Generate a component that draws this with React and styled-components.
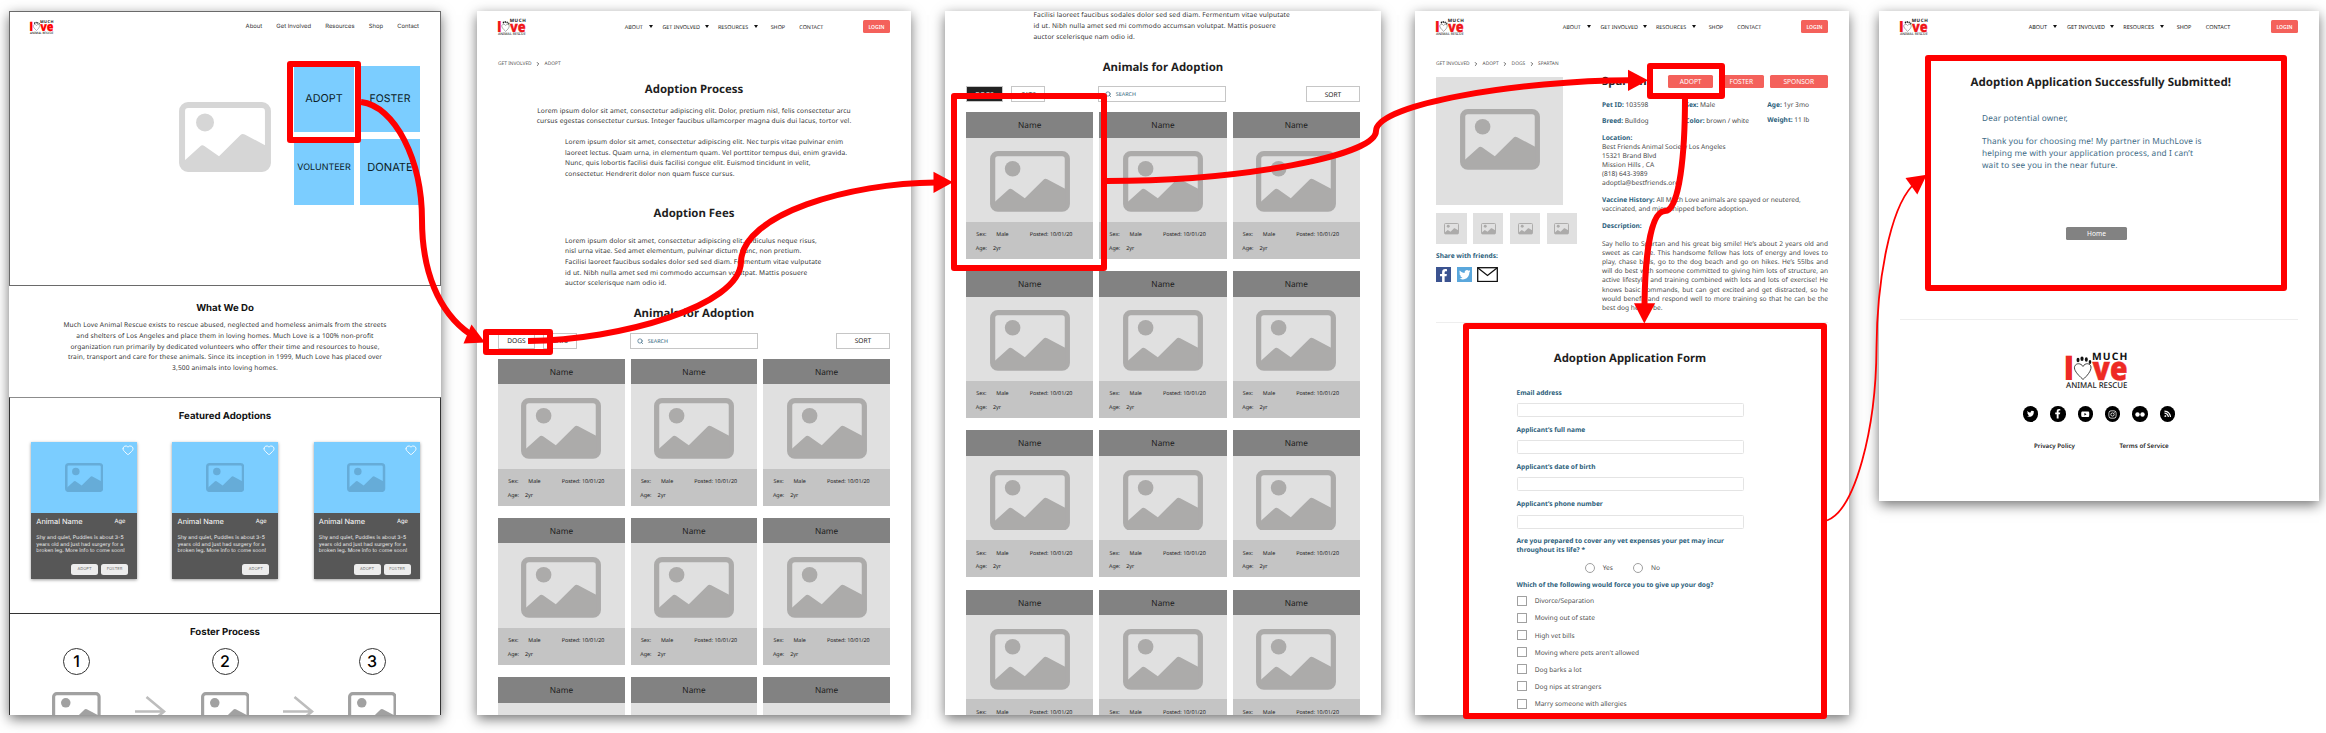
import React from 'react';
import styled, { createGlobalStyle } from 'styled-components';
import { Heart, Search, ChevronRight } from 'lucide-react';
import { FaFacebookF, FaTwitter, FaYoutube, FaInstagram, FaRss } from 'react-icons/fa';

const GlobalStyle = createGlobalStyle`
  *, *::before, *::after { box-sizing: border-box; }
  body { margin: 0; background: #fff; text-rendering: geometricPrecision; }
`;

const noto = '"Noto Sans", sans-serif';
const inter = 'Inter, sans-serif';
const coral = '#f4615b';
const slate = '#2d5f7c';

/* ---------- board ---------- */

const Board = styled.main`
  position: relative;
  display: flex;
  align-items: flex-start;
  width: 2326px;
  height: 733px;
  padding: 11px 0 0 9px;
  overflow: hidden;
  background: #fff;
  font-family: ${noto};
  color: #222;
`;

const Screen = styled.section`
  flex: none;
  width: ${(p) => p.$w}px;
  height: ${(p) => p.$h || 704}px;
  margin-left: ${(p) => p.$gap || 0}px;
  padding: 0 ${(p) => (p.$flush ? 0 : 21)}px;
  overflow: hidden;
  background: #fff;
  box-shadow: 0 4px 12px rgba(0, 0, 0, 0.55);
  font-family: ${(p) => (p.$flush ? inter : noto)};
`;

/* ---------- shared pieces ---------- */

const Title = styled.h2`
  margin: ${(p) => p.$mt}px 0 -0.5px ${(p) => p.$shift || 0}px;
  padding-top: 0.5px;
  font-size: ${(p) => p.$size || 11.4}px;
  font-weight: 700;
  line-height: 16px;
  text-align: center;
  white-space: nowrap;
  color: #1f1f1f;
`;

const Copy = styled.p`
  margin: ${(p) => p.$mt}px 0 -0.85px ${(p) => p.$indent || 0}px;
  padding-top: 0.85px;
  font-family: ${noto};
  font-size: 6.6px;
  line-height: 10.67px;
  letter-spacing: ${(p) => p.$track || 0.14}px;
  text-align: ${(p) => (p.$center ? 'center' : 'left')};
  white-space: pre;
  color: #333;
`;

const Rule = styled.hr`
  height: 1px;
  margin: ${(p) => p.$mt}px 0 0;
  border: 0;
  background: #eee;
`;

const PictureSvg = styled.svg`
  display: block;
  flex: none;
  width: ${(p) => p.$w}px;
  height: ${(p) => p.$w * 0.76}px;
  color: ${(p) => p.$color || '#acabaa'};
`;

function Picture({ w, color }) {
  return (
    <PictureSvg $w={w} $color={color} viewBox="0 0 92 70">
      <rect x="3" y="3" width="86" height="64" rx="6" fill="none" stroke="currentColor" strokeWidth="6" />
      <circle cx="26" cy="20.5" r="9" fill="currentColor" />
      <path
        d="M5 59 L21 44.500 Q23 42.500 25.300 44 L40 54.300 L61.500 33 Q63.300 31.300 65.800 32.500 L87 43.800 V67 H5Z"
        fill="currentColor"
      />
    </PictureSvg>
  );
}

const LogoSvg = styled.svg`
  display: block;
  flex: none;
  width: ${(p) => p.$w}px;
  height: ${(p) => p.$w * 0.585}px;
  overflow: visible;
`;

function Logo({ w, red = '#ee2a24' }) {
  return (
    <LogoSvg $w={w} viewBox="0 0 61.500 36">
      <g fontFamily='"Noto Sans", sans-serif' fontWeight="900">
        <text x="-2.300" y="27.800" fontSize="32" fill={red}>l</text>
        <text x="26.500" y="27.800" fontSize="32.500" fill={red} stroke={red} strokeWidth="0.500" textLength="35" lengthAdjust="spacingAndGlyphs">ve</text>
        <text x="26" y="7.700" fontSize="10.300" fontWeight="700" fill="#111" textLength="35.500">MUCH</text>
      </g>
      <text x="0" y="35.800" fontFamily='"Noto Sans", sans-serif' fontWeight="500" fontSize="8" fill="#222" textLength="61.500" lengthAdjust="spacingAndGlyphs">
        ANIMAL RESCUE
      </text>
      <path
        d="M17 27.500 C11 22 7.600 18 8.600 14.500 C10 10.700 15 11 17 14.500 C19 10.500 24.500 11 25 15 C25.300 19 21 24 17 27.500Z"
        fill="none"
        stroke="#222"
        strokeWidth="0.850"
      />
      <g fill="#111">
        <ellipse cx="12" cy="8" rx="1.500" ry="2.200" />
        <ellipse cx="16" cy="6.800" rx="1.600" ry="2.300" />
        <ellipse cx="20.300" cy="7.500" rx="1.500" ry="2.200" />
        <ellipse cx="24" cy="10" rx="1.300" ry="2" />
      </g>
    </LogoSvg>
  );
}

/* ---------- site header ---------- */

const HeaderBar = styled.header`
  display: flex;
  align-items: center;
  height: 31.4px;
`;

const Nav = styled.nav`
  display: grid;
  grid-template-columns: 37.7px 55.6px 52.7px 28.7px auto;
  margin: 0 auto 0 ${(p) => p.$ml}px;
  font-size: 5.42px;
  line-height: 8px;
  white-space: nowrap;
  zoom: ${(p) => p.$scale || 1};
`;

const NavItem = styled.span`
  display: flex;
  align-items: center;
  justify-content: space-between;
  padding-right: ${(p) => p.$pad || 9.4}px;
`;

const Caret = styled.i`
  border: solid transparent;
  border-width: 3px 2px 0;
  border-top-color: #111;
`;

const Button = styled.button`
  display: flex;
  flex: none;
  align-items: center;
  justify-content: center;
  width: ${(p) => p.$w}px;
  height: 13.2px;
  padding: 0;
  border: 0;
  border-radius: 1.5px;
  background: ${(p) => p.$bg || coral};
  color: #fff;
  font: ${(p) => p.$weight || 400} ${(p) => p.$size || 6.6}px ${noto};
`;

function Header({ ml = 99, scale }) {
  return (
    <HeaderBar>
      <Logo w={27.7} red="#f0161a" />
      <Nav $ml={ml} $scale={scale}>
        <NavItem>ABOUT<Caret /></NavItem>
        <NavItem>GET INVOLVED<Caret /></NavItem>
        <NavItem $pad={12.3}>RESOURCES<Caret /></NavItem>
        <NavItem>SHOP</NavItem>
        <NavItem>CONTACT</NavItem>
      </Nav>
      <Button $w={27} $size={5} $weight={600}>LOGIN</Button>
    </HeaderBar>
  );
}

const Crumbs = styled.div`
  display: flex;
  align-items: center;
  gap: 3.5px;
  height: 8px;
  margin: 17.2px 0 -0.6px;
  font-size: 4.84px;
  color: #555;
`;

function Breadcrumb({ trail }) {
  return (
    <Crumbs>
      {trail.map((step, i) => (
        <React.Fragment key={step}>
          {i > 0 && <ChevronRight size={6} strokeWidth={3.6} />}
          <span>{step}</span>
        </React.Fragment>
      ))}
    </Crumbs>
  );
}

/* ---------- home ---------- */

const Hero = styled.div`
  height: 275px;
  border: 1px solid #6a6a6a;
`;

const HomeBar = styled.header`
  display: flex;
  align-items: center;
  justify-content: space-between;
  height: 29.8px;
  padding: 0 21px 0 20px;
`;

const HomeNav = styled.nav`
  display: flex;
  gap: 14.1px;
  font-size: 5.9px;
  color: #333;
`;

const HeroRow = styled.div`
  display: flex;
  gap: 23px;
  padding: 24px 0 0 169px;
`;

const HeroPicture = styled.div`
  padding-top: 36.7px;
`;

const Tiles = styled.div`
  display: grid;
  grid-template-columns: 60px 60px;
  grid-auto-rows: 66px;
  gap: 7px 6px;
`;

const Tile = styled.div`
  display: flex;
  align-items: center;
  justify-content: center;
  padding-bottom: ${(p) => (p.$raised ? 9 : 0)}px;
  background: #7bcdff;
  font-size: ${(p) => p.$size}px;
  color: #0c1c26;
`;

const About = styled.div`
  height: 111px;
  padding-top: 16.3px;
`;

const HomeTitle = styled.h2`
  margin: 0 0 -0.6px;
  padding-top: 0.6px;
  font-size: 9.65px;
  line-height: 12px;
  text-align: center;
  color: #111;
`;

const HomeSection = styled.div`
  height: ${(p) => p.$h}px;
  padding-top: 12px;
  border: solid #333;
  border-width: 1px 1px 0;
  border-top-color: ${(p) => p.$edge || '#333'};
`;

const FeatureRow = styled.div`
  display: flex;
  justify-content: space-between;
  padding: 19.7px 20.5px 0 21px;
`;

const FeatureCard = styled.article`
  width: 106px;
  height: 137.3px;
  background: #575757;
  color: #eee;
  box-shadow: 0 1px 3px rgba(0, 0, 0, 0.4);
`;

const FeatureImage = styled.div`
  display: flex;
  justify-content: center;
  position: relative;
  height: 71.3px;
  padding-top: 21px;
  background: #7bcdff;
`;

const Favorite = styled(Heart)`
  position: absolute;
  top: 2.2px;
  right: 2.8px;
  width: 12px;
  height: 12px;
  color: #fff;
`;

const FeatureHead = styled.div`
  display: flex;
  align-items: center;
  justify-content: space-between;
  height: 8px;
  margin: 4.7px 11.5px 0 5.3px;
  font-size: 7.4px;
  color: #fff;
`;

const FeatureAge = styled.span`
  font-size: 5.8px;
`;

const FeatureText = styled.p`
  margin: 9.3px 0 0 5.3px;
  font-size: 5.2px;
  line-height: 6.75px;
  white-space: pre;
`;

const Chips = styled.div`
  display: flex;
  justify-content: flex-end;
  gap: 3px;
  margin: 9px 9px 0 0;
`;

const Chip = styled.span`
  width: 27px;
  border-radius: 2.5px;
  background: #ededed;
  color: #777;
  font-size: 4.05px;
  line-height: 10.7px;
  text-align: center;
`;

const Steps = styled.div`
  display: grid;
  grid-template-columns: 49px 99.5px 49px 98px 49px;
  justify-items: center;
  row-gap: 16.8px;
  padding: 10.2px 0 0 42px;
`;

const StepNumber = styled.span`
  grid-column: ${(p) => p.$col};
  width: 27px;
  height: 27px;
  border: 1px solid #333;
  border-radius: 50%;
  font-size: 16px;
  font-weight: 500;
  line-height: 25px;
  text-align: center;
  color: #000;
`;

const ArrowSvg = styled.svg`
  display: block;
  width: 31px;
  height: 31px;
  margin-top: 4.5px;
`;

function StepArrow() {
  return (
    <ArrowSvg viewBox="0 0 31 31" fill="none" stroke="#bdbdbd" strokeWidth="2.600">
      <path d="M0 15.500H29M11.500 1L29 15.500L11.500 30" />
    </ArrowSvg>
  );
}

function Feature({ actions }) {
  return (
    <FeatureCard>
      <FeatureImage>
        <Picture w={38.3} color="#66acd8" />
        <Favorite strokeWidth={1.8} />
      </FeatureImage>
      <FeatureHead>
        Animal Name
        <FeatureAge>Age</FeatureAge>
      </FeatureHead>
      <FeatureText>
        {'Shy and quiet, Puddles is about 3-5\nyears old and just had surgery for a\nbroken leg. More info to come soon!'}
      </FeatureText>
      <Chips>{actions.map((a) => <Chip key={a}>{a}</Chip>)}</Chips>
    </FeatureCard>
  );
}

function HomeScreen() {
  return (
    <Screen $w={432} $flush>
      <Hero>
        <HomeBar>
          <Logo w={23.5} red="#ff0000" />
          <HomeNav>
            <span>About</span>
            <span>Get Involved</span>
            <span>Resources</span>
            <span>Shop</span>
            <span>Contact</span>
          </HomeNav>
        </HomeBar>
        <HeroRow>
          <HeroPicture><Picture w={92} color="#d6d6d6" /></HeroPicture>
          <Tiles>
            <Tile $size={10.8}>ADOPT</Tile>
            <Tile $size={10.5}>FOSTER</Tile>
            <Tile $size={8.95} $raised>VOLUNTEER</Tile>
            <Tile $size={11.1} $raised>DONATE</Tile>
          </Tiles>
        </HeroRow>
      </Hero>
      <About>
        <HomeTitle>What We Do</HomeTitle>
        <Copy $mt={5.1} $center $track={0.13}>
          {'Much Love Animal Rescue exists to rescue abused, neglected and homeless animals from the streets\nand shelters of Los Angeles and place them in loving homes. Much Love is a 100% non-profit\norganization run primarily by dedicated volunteers who offer their time and resources to house,\ntrain, transport and care for these animals. Since its inception in 1999, Much Love has placed over\n3,500 animals into loving homes.'}
        </Copy>
      </About>
      <HomeSection $h={216} $edge="#8c8c8c">
        <HomeTitle>Featured Adoptions</HomeTitle>
        <FeatureRow>
          <Feature actions={['ADOPT', 'FOSTER']} />
          <Feature actions={['ADOPT']} />
          <Feature actions={['ADOPT', 'FOSTER']} />
        </FeatureRow>
      </HomeSection>
      <HomeSection $h={130}>
        <HomeTitle>Foster Process</HomeTitle>
        <Steps>
          <StepNumber $col={1}>1</StepNumber>
          <StepNumber $col={3}>2</StepNumber>
          <StepNumber $col={5}>3</StepNumber>
          <Picture w={48.7} color="#a1a1a1" />
          <StepArrow />
          <Picture w={48.7} color="#a1a1a1" />
          <StepArrow />
          <Picture w={48.7} color="#a1a1a1" />
        </Steps>
      </HomeSection>
    </Screen>
  );
}

/* ---------- animal listing ---------- */

const FilterBar = styled.div`
  display: grid;
  grid-template-columns: 37px 8.3px 34px 52.5px 128px 1fr 54px;
  height: 15.7px;
  margin-top: 11.3px;
`;

const FilterBox = styled.div`
  display: flex;
  grid-column: ${(p) => p.$col};
  align-items: center;
  justify-content: center;
  border: 1px solid #c6c6c6;
  background: ${(p) => (p.$active ? '#222' : '#fff')};
  color: ${(p) => (p.$active ? '#fff' : '#222')};
  font-size: 6.6px;
`;

const SearchBox = styled(FilterBox)`
  justify-content: flex-start;
  gap: 4.5px;
  padding-left: 6px;
  color: ${slate};
  font-size: 5.4px;
`;

const CardGrid = styled.div`
  display: grid;
  grid-template-columns: repeat(3, 1fr);
  gap: 12.2px 5.8px;
  margin-top: 10px;
`;

const Card = styled.article`
  height: 147px;
  background: #c4c4c4;
`;

const CardName = styled.div`
  height: 25.5px;
  background: #828282;
  font-size: 8.25px;
  line-height: 27px;
  text-align: center;
  color: #1c1c1c;
`;

const CardImage = styled.div`
  display: flex;
  justify-content: center;
  height: 84.3px;
  padding-top: 13.6px;
  background: #e0e0e0;
`;

const CardFacts = styled.div`
  display: grid;
  grid-template-columns: 20px 33.4px auto;
  row-gap: 5.7px;
  padding: 8.3px 0 0 10.3px;
  font-size: 5.4px;
  line-height: 8px;
  color: #222;
`;

const AgeFact = styled.span`
  grid-column: 1 / 3;
  display: flex;
  gap: 6px;
  margin-left: -0.6px;
`;

function AnimalCard() {
  return (
    <Card>
      <CardName>Name</CardName>
      <CardImage><Picture w={80} /></CardImage>
      <CardFacts>
        <span>Sex:</span>
        <span>Male</span>
        <span>Posted: 10/01/20</span>
        <AgeFact><span>Age:</span><span>2yr</span></AgeFact>
      </CardFacts>
    </Card>
  );
}

function Listing({ rows, dogsActive }) {
  return (
    <>
      <Title $mt={17.7}>Animals for Adoption</Title>
      <FilterBar>
        <FilterBox $col={1} $active={dogsActive}>DOGS</FilterBox>
        <FilterBox $col={3}>CATS</FilterBox>
        <SearchBox $col={5}><Search size={6.5} strokeWidth={2.4} />SEARCH</SearchBox>
        <FilterBox $col={7}>SORT</FilterBox>
      </FilterBar>
      <CardGrid>
        {Array.from({ length: rows * 3 }, (_, i) => <AnimalCard key={i} />)}
      </CardGrid>
    </>
  );
}

function AdoptScreen() {
  return (
    <Screen $w={434} $gap={36}>
      <Header />
      <Breadcrumb trail={['GET INVOLVED', 'ADOPT']} />
      <Title $mt={14.4}>Adoption Process</Title>
      <Copy $mt={7.3} $center>
        {'Lorem ipsum dolor sit amet, consectetur adipiscing elit. Dolor, pretium nisl, felis consectetur arcu\ncursus egestas consectetur cursus. Integer faucibus ullamcorper magna duis dui lacus, tortor vel.'}
      </Copy>
      <Copy $mt={10} $indent={67}>
        {'Lorem ipsum dolor sit amet, consectetur adipiscing elit. Nec turpis vitae pulvinar enim\nlaoreet lectus. Quam urna, in elementum quam. Vel porttitor tempus dui, enim gravida.\nNunc, quis lobortis facilisi duis facilisi congue elit. Euismod tincidunt in velit,\nconsectetur. Hendrerit dolor non quam fusce cursus.'}
      </Copy>
      <Title $mt={26.8}>Adoption Fees</Title>
      <Copy $mt={13.2} $indent={67}>
        {'Lorem ipsum dolor sit amet, consectetur adipiscing elit. Ridiculus neque risus,\nnisl urna vitae. Sed amet elementum, pulvinar dictum nunc, non pretium.\nFacilisi laoreet faucibus sodales dolor sed sed diam. Fermentum vitae vulputate\nid ut. Nibh nulla amet sed mi commodo accumsan volutpat. Mattis posuere\nauctor scelerisque nam odio id.'}
      </Copy>
      <Listing rows={3} />
    </Screen>
  );
}

function DogsScreen() {
  return (
    <Screen $w={436} $gap={34}>
      <Copy $mt={-1.6} $indent={67.5}>
        {'Facilisi laoreet faucibus sodales dolor sed sed diam. Fermentum vitae vulputate\nid ut. Nibh nulla amet sed mi commodo accumsan volutpat. Mattis posuere\nauctor scelerisque nam odio id.'}
      </Copy>
      <Listing rows={4} dogsActive />
    </Screen>
  );
}

/* ---------- pet profile and application form ---------- */

const Profile = styled.div`
  display: grid;
  grid-template-columns: 166px 1fr;
  margin-top: 8px;
  font-size: 6.6px;
  line-height: 9.15px;
  color: #4a4a4a;
`;

const Gallery = styled.div`
  padding-top: 2.3px;
`;

const MainPhoto = styled.div`
  display: flex;
  justify-content: center;
  width: 127px;
  height: 127.7px;
  padding-top: 31.7px;
  background: #e0e0e0;
`;

const Thumbs = styled.div`
  display: flex;
  gap: 6.3px;
  margin-top: 8px;
`;

const Thumb = styled.div`
  display: flex;
  align-items: center;
  justify-content: center;
  width: 30.6px;
  height: 30.8px;
  padding-top: 1.5px;
  background: #e0e0e0;
`;

const Label = styled.b`
  font-weight: 700;
  color: ${slate};
`;

const ShareLabel = styled(Label)`
  display: block;
  margin-top: 7.2px;
`;

const ShareRow = styled.div`
  display: flex;
  gap: 5.5px;
  margin-top: 6.7px;
`;

const ShareTile = styled.span`
  display: flex;
  align-items: ${(p) => (p.$low ? 'flex-end' : 'center')};
  justify-content: ${(p) => (p.$low ? 'flex-end' : 'center')};
  width: 15.2px;
  height: 15.2px;
  padding-right: ${(p) => (p.$low ? 1 : 0)}px;
  background: ${(p) => p.$bg};
  color: #fff;
`;

const MailSvg = styled.svg`
  width: 21px;
  height: 15.2px;
  margin-left: -0.7px;
`;

const TitleRow = styled.div`
  display: flex;
  align-items: center;
  height: 13.4px;
`;

const PetName = styled.h1`
  margin: 0 auto 0 0;
  font-size: 11.4px;
  color: #222;
`;

const Actions = styled.div`
  display: flex;
  gap: 5.7px;
`;

const Facts = styled.div`
  display: grid;
  grid-template-columns: 83.3px 82px auto;
  row-gap: 7.2px;
  margin-top: 11.5px;
  white-space: nowrap;
`;

const Fact = styled.span`
  margin-top: ${(p) => p.$nudge || 0}px;
`;

const Block = styled.div`
  margin-top: ${(p) => p.$mt || 7.3}px;
  white-space: pre;
`;

const Justified = styled.span`
  display: block;
  white-space: nowrap;
  text-align: justify;
  text-align-last: ${(p) => (p.$last ? 'left' : 'justify')};
`;

const story = [
  'Say hello to Spartan and his great big smile! He’s about 2 years old and',
  'sweet as can be. This handsome fellow has lots of energy and loves to',
  'play, chase balls, go to the dog beach and go on hikes. He’s 55lbs and',
  'will do best with someone committed to giving him lots of structure, an',
  'active lifestyle, and training combined with lots and lots of exercise! He',
  'knows basic commands, but can get excited and get distracted, so he',
  'would benefit and respond well to more training so that he can be the',
  'best dog he can be.',
];

const Form = styled.form`
  width: 227px;
  margin-left: 80.5px;
  font-size: 6.6px;
  line-height: 9.15px;
  color: #4f4f4f;
`;

const FormFields = styled.div`
  display: grid;
  gap: 7.35px;
  margin-top: 21.4px;
`;

const Field = styled.label`
  display: grid;
  gap: 6.6px;
  font-weight: 700;
  color: ${slate};
`;

const Input = styled.input`
  width: 100%;
  height: 14px;
  padding: 0;
  border: 1px solid #e4e4e4;
  border-radius: 1.5px;
`;

const Question = styled.p`
  margin: ${(p) => p.$mt}px 0 0;
  font-weight: 700;
  white-space: pre;
  color: ${slate};
`;

const Radios = styled.div`
  display: flex;
  gap: 20.3px;
  margin: 8.5px 0 0 68.5px;
`;

const Option = styled.span`
  display: flex;
  align-items: center;
  gap: 7.7px;
  height: 10px;
`;

const Mark = styled.i`
  width: 10px;
  height: 10px;
  border: 1px solid #a0a0a0;
  border-radius: ${(p) => (p.$round ? '50%' : '0.5px')};
`;

const Checks = styled.div`
  display: grid;
  gap: 7.1px;
  margin: 6.9px 0 0 0.5px;
`;

const reasons = [
  'Divorce/Separation',
  'Moving out of state',
  'High vet bills',
  "Moving where pets aren't allowed",
  'Dog barks a lot',
  'Dog nips at strangers',
  'Marry someone with allergies',
];

function ProfileScreen() {
  return (
    <Screen $w={434} $gap={34}>
      <Header />
      <Breadcrumb trail={['GET INVOLVED', 'ADOPT', 'DOGS', 'SPARTAN']} />
      <Profile>
        <Gallery>
          <MainPhoto><Picture w={80} /></MainPhoto>
          <Thumbs>
            {[1, 2, 3, 4].map((n) => <Thumb key={n}><Picture w={15} /></Thumb>)}
          </Thumbs>
          <ShareLabel>Share with friends:</ShareLabel>
          <ShareRow>
            <ShareTile $bg="#3b5390" $low><FaFacebookF size={13} /></ShareTile>
            <ShareTile $bg="#5aa7dc"><FaTwitter size={11.5} /></ShareTile>
            <MailSvg viewBox="0 0 21 15.200" fill="none" stroke="#111" strokeWidth="1.300">
              <rect x="0.700" y="0.700" width="19.600" height="13.800" />
              <path d="M0.700 0.700L10.500 8.500L20.300 0.700" />
            </MailSvg>
          </ShareRow>
        </Gallery>
        <div>
          <TitleRow>
            <PetName>Spartan</PetName>
            <Actions>
              <Button $w={45}>ADOPT</Button>
              <Button $w={45}>FOSTER</Button>
              <Button $w={58.5}>SPONSOR</Button>
            </Actions>
          </TitleRow>
          <Facts>
            <Fact><Label>Pet ID:</Label> 103598</Fact>
            <Fact><Label>Sex:</Label> Male</Fact>
            <Fact><Label>Age:</Label> 1yr 3mo</Fact>
            <Fact><Label>Breed:</Label> Bulldog</Fact>
            <Fact><Label>Color:</Label> brown / white</Fact>
            <Fact $nudge={-1.7}><Label>Weight:</Label> 11 lb</Fact>
          </Facts>
          <Block>
            <Label>Location:</Label>
            {'\nBest Friends Animal Society Los Angeles\n15321 Brand Blvd\nMission Hills , CA\n(818) 643-3989\nadoptla@bestfriends.org'}
          </Block>
          <Block>
            <Label>Vaccine History:</Label>
            {' All Much Love animals are spayed or neutered,\nvaccinated, and microchipped before adoption.'}
          </Block>
          <Block><Label>Description:</Label></Block>
          <Block $mt={9.1}>
            {story.map((line, i) => <Justified key={line} $last={i === story.length - 1}>{line}</Justified>)}
          </Block>
        </div>
      </Profile>
      <Rule $mt={10.3} />
      <Form>
        <Title $mt={26.8}>Adoption Application Form</Title>
        <FormFields>
          <Field>Email address<Input /></Field>
          <Field>Applicant’s full name<Input /></Field>
          <Field>Applicant’s date of birth<Input /></Field>
          <Field>Applicant’s phone number<Input /></Field>
        </FormFields>
        <Question $mt={7.4}>
          {'Are you prepared to cover any vet expenses your pet may incur\nthroughout its life? *'}
        </Question>
        <Radios>
          <Option><Mark $round />Yes</Option>
          <Option><Mark $round />No</Option>
        </Radios>
        <Question $mt={7.2}>Which of the following would force you to give up your dog?</Question>
        <Checks>
          {reasons.map((r) => <Option key={r}><Mark />{r}</Option>)}
        </Checks>
      </Form>
    </Screen>
  );
}

/* ---------- confirmation ---------- */

const Message = styled.p`
  margin: ${(p) => p.$mt}px 0 0 82px;
  font-size: 8.25px;
  line-height: 11.75px;
  letter-spacing: 0.14px;
  white-space: pre;
  color: #3e6a85;
`;

const Centered = styled.div`
  display: flex;
  justify-content: center;
  gap: ${(p) => p.$gap || 0}px;
  margin: ${(p) => p.$mt}px ${(p) => p.$right || 0}px 0 0;
`;

const Social = styled.span`
  display: flex;
  align-items: center;
  justify-content: center;
  width: 15.4px;
  height: 15.4px;
  border-radius: 50%;
  background: #000;
  color: #fff;
`;

const LegalLink = styled.span`
  font-size: 6.2px;
  font-weight: 600;
  line-height: 9px;
`;

function DoneScreen() {
  return (
    <Screen $w={440} $h={490} $gap={30}>
      <Header ml={99.6} scale={1.014} />
      <Title $mt={32.1} $shift={3.5} $size={11.55}>Adoption Application Successfully Submitted!</Title>
      <Message $mt={22.3}>Dear potential owner,</Message>
      <Message $mt={11.6}>
        {'Thank you for choosing me! My partner in MuchLove is\nhelping me with your application process, and I can’t\nwait to see you in the near future.'}
      </Message>
      <Centered $mt={55.9} $right={5}><Button $w={61} $bg="#828282">Home</Button></Centered>
      <Rule $mt={78.6} />
      <Centered $mt={32} $right={5}><Logo w={61.5} /></Centered>
      <Centered $mt={18.4} $gap={12}>
        <Social><FaTwitter size={7.5} /></Social>
        <Social><FaFacebookF size={9.5} /></Social>
        <Social><FaYoutube size={8.5} /></Social>
        <Social><FaInstagram size={9} /></Social>
        <Social>
          <svg width="10" height="5" viewBox="0 0 10 5" fill="#fff">
            <circle cx="2.500" cy="2.500" r="2.200" />
            <circle cx="7.500" cy="2.500" r="2.200" />
          </svg>
        </Social>
        <Social><FaRss size={7.5} /></Social>
      </Centered>
      <Centered $mt={18.8} $gap={44.5} $right={-4.6}>
        <LegalLink>Privacy Policy</LegalLink>
        <LegalLink>Terms of Service</LegalLink>
      </Centered>
    </Screen>
  );
}

/* ---------- flow annotations drawn over the screens ---------- */

const FlowLayer = styled.svg`
  position: absolute;
  top: 0;
  left: 0;
  width: 2326px;
  height: 733px;
  pointer-events: none;
`;

function Flow() {
  return (
    <FlowLayer viewBox="0 0 2326 733" fill="none" stroke="#f00" strokeWidth="6" strokeLinejoin="round">
      <rect x="290" y="64" width="68" height="76" />
      <rect x="486" y="332" width="64" height="20" />
      <rect x="954" y="96" width="150" height="172" />
      <rect x="1650" y="66" width="72" height="30" />
      <rect x="1466" y="326" width="358" height="390" />
      <rect x="1928" y="58" width="356" height="230" />
      <path d="M361 102C395 106 422 160 422 220C422 270 438 312 470 334" />
      <path d="M528 341C620 340 740 306 741 262C742 214 850 183 936 182.500" />
      <path d="M1107 181C1240 181 1376 156 1376 131C1376 104 1520 80.500 1630 80.300" />
      <path d="M1685 98C1685 150 1680 211 1665 211C1650 211 1645 260 1644.500 305" />
      <path d="M1827 520.500C1855 510 1876 430 1876.500 348C1877 280 1890 210 1912 186" strokeWidth="1.800" />
      <g fill="#f00" stroke="none">
        <path d="M485 342.500L471.500 324.500L463.500 343.500Z" />
        <path d="M953 182.300L933.500 171.700V193Z" />
        <path d="M1648 80.300L1628 69.800V91Z" />
        <path d="M1644.300 323.500L1634 303.300H1655.200Z" />
        <path d="M1926.700 174.700L1905.500 178L1917.300 194.500Z" />
      </g>
    </FlowLayer>
  );
}

export default function App() {
  return (
    <Board>
      <GlobalStyle />
      <HomeScreen />
      <AdoptScreen />
      <DogsScreen />
      <ProfileScreen />
      <DoneScreen />
      <Flow />
    </Board>
  );
}
